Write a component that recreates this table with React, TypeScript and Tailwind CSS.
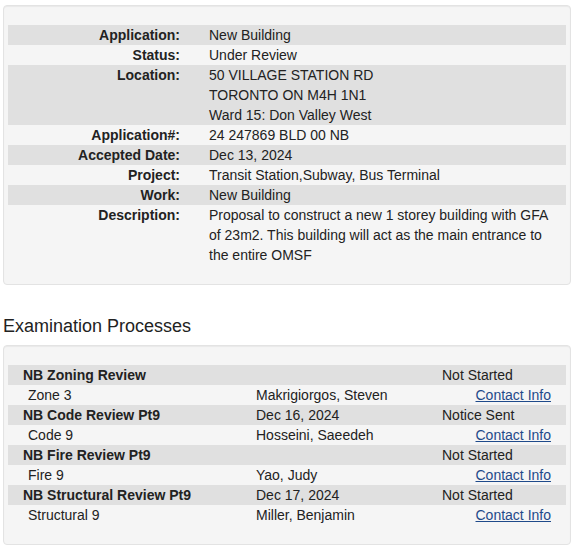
const details: { label: string; value: string[] }[] = [
  { label: 'Application:', value: ['New Building'] },
  { label: 'Status:', value: ['Under Review'] },
  {
    label: 'Location:',
    value: ['50 VILLAGE STATION RD', 'TORONTO ON M4H 1N1', 'Ward 15: Don Valley West'],
  },
  { label: 'Application#:', value: ['24 247869 BLD 00 NB'] },
  { label: 'Accepted Date:', value: ['Dec 13, 2024'] },
  { label: 'Project:', value: ['Transit Station,Subway, Bus Terminal'] },
  { label: 'Work:', value: ['New Building'] },
  {
    label: 'Description:',
    value: [
      'Proposal to construct a new 1 storey building with GFA of 23m2. This building will act as the main entrance to the entire OMSF',
    ],
  },
]

interface Process {
  name: string
  date: string
  status: string
  group: string
  examiner: string
}

const processes: Process[] = [
  { name: 'NB Zoning Review', date: '', status: 'Not Started', group: 'Zone 3', examiner: 'Makrigiorgos, Steven' },
  { name: 'NB Code Review Pt9', date: 'Dec 16, 2024', status: 'Notice Sent', group: 'Code 9', examiner: 'Hosseini, Saeedeh' },
  { name: 'NB Fire Review Pt9', date: '', status: 'Not Started', group: 'Fire 9', examiner: 'Yao, Judy' },
  {
    name: 'NB Structural Review Pt9',
    date: 'Dec 17, 2024',
    status: 'Not Started',
    group: 'Structural 9',
    examiner: 'Miller, Benjamin',
  },
]

// Bootstrap-style "well" panel
function Well({ children }: { children: React.ReactNode }) {
  return (
    <div className="mx-[3px] rounded-[4px] border border-[#e3e3e3] bg-[#f5f5f5] px-[4px] py-[19px] shadow-[inset_0_1px_1px_rgba(0,0,0,0.05)]">
      {children}
    </div>
  )
}

export default function App() {
  return (
    <div className="min-h-[552px] bg-white pt-[5px] font-['Liberation_Sans',Arial,sans-serif] text-[14px] leading-[20px] text-[#222]">
      <Well>
        {details.map((row, i) => (
          <div key={row.label} className={`flex ${i % 2 === 0 ? 'bg-[#e0e0e0]' : ''}`}>
            <div className="w-[172px] shrink-0 text-right font-bold">{row.label}</div>
            <div className="pl-[29px] pr-[10px]">
              {row.value.map((line) => (
                <div key={line}>{line}</div>
              ))}
            </div>
          </div>
        ))}
      </Well>

      <h2 className="mt-[30px] mb-[8px] px-[3px] text-[18px] leading-[22px] font-normal">
        Examination Processes
      </h2>

      <Well>
        {processes.map((p) => (
          <div key={p.name}>
            <div className="grid grid-cols-[233px_186px_1fr] bg-[#e0e0e0] pl-[15px] pr-[15px]">
              <div className="font-bold">{p.name}</div>
              <div>{p.date}</div>
              <div>{p.status}</div>
            </div>
            <div className="grid grid-cols-[233px_186px_1fr] pl-[15px] pr-[15px]">
              <div className="pl-[5px]">{p.group}</div>
              <div>{p.examiner}</div>
              <div className="text-right">
                <a href="#" className="text-[#1f4a8a] underline">
                  Contact Info
                </a>
              </div>
            </div>
          </div>
        ))}
      </Well>
    </div>
  )
}
